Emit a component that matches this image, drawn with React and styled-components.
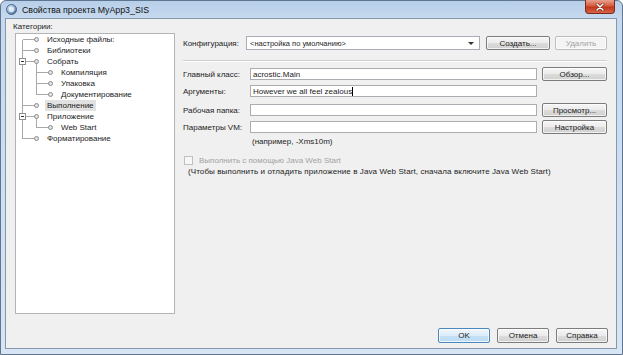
import React from 'react'
import styled, { createGlobalStyle } from 'styled-components'

const GlobalStyle = createGlobalStyle`
  html, body {
    margin: 0;
    padding: 0;
  }
  body {
    width: 623px;
    height: 355px;
    overflow: hidden;
    font-family: "Liberation Sans", Arial, sans-serif;
    font-size: 8px;
    color: #1c1c1c;
  }
`

const tree = [
  { label: 'Исходные файлы:', level: 1, first: true },
  { label: 'Библиотеки', level: 1 },
  { label: 'Собрать', level: 1, expanded: true },
  { label: 'Компиляция', level: 2 },
  { label: 'Упаковка', level: 2 },
  { label: 'Документирование', level: 2, lastChild: true },
  { label: 'Выполнение', level: 1, selected: true },
  { label: 'Приложение', level: 1, expanded: true },
  { label: 'Web Start', level: 2, lastChild: true },
  { label: 'Форматирование', level: 1, last: true },
]

function App() {
  return (
    <>
      <GlobalStyle />
      <Window>
        <TitleBar>
          <svg width="11" height="11" viewBox="0 0 11 11">
            <defs>
              <radialGradient id="ic" cx="40%" cy="35%" r="70%">
                <stop offset="0" stopColor="#e6f0f8" />
                <stop offset="0.6" stopColor="#8fb0cf" />
                <stop offset="1" stopColor="#3f5f82" />
              </radialGradient>
            </defs>
            <circle cx="5.5" cy="5.5" r="5" fill="url(#ic)" stroke="#3b5677" strokeWidth="0.8" />
            <circle cx="5.5" cy="5.5" r="2.6" fill="#f2f6fa" opacity="0.7" />
          </svg>
          <Title>Свойства проекта MyApp3_SIS</Title>
          <CloseButton>
            <svg width="10" height="8" viewBox="0 0 10 8">
              <path d="M2 1 L8 7 M8 1 L2 7" stroke="#6a1d12" strokeWidth="2.6" strokeLinecap="round" />
              <path d="M2 1 L8 7 M8 1 L2 7" stroke="#fff" strokeWidth="1.5" strokeLinecap="round" />
            </svg>
          </CloseButton>
        </TitleBar>

        <Client>
          <Body>
            <Sidebar>
              <SideLabel>Категории:</SideLabel>
              <Tree>
                {tree.map((item) => (
                  <TreeRow key={item.label}>
                    {item.level === 1 ? (
                      <>
                        <Guide $v={item.first ? 'bottom' : item.last ? 'top' : 'full'} $h="right">
                          {item.expanded && <Expander />}
                        </Guide>
                        <Guide $v={item.expanded ? 'bottom' : 'none'} $h="left">
                          <Bullet />
                        </Guide>
                      </>
                    ) : (
                      <>
                        <Guide $v="full" $h="none" />
                        <Guide $v={item.lastChild ? 'top' : 'full'} $h="right" />
                        <Guide $v="none" $h="left">
                          <Bullet />
                        </Guide>
                      </>
                    )}
                    <NodeLabel $selected={item.selected}>{item.label}</NodeLabel>
                  </TreeRow>
                ))}
              </Tree>
            </Sidebar>

            <Main>
              <ConfigRow>
                <ConfigLabel>Конфигурация:</ConfigLabel>
                <Combo>
                  <span>&lt;настройка по умолчанию&gt;</span>
                  <ComboArrow />
                </Combo>
                <Button $w={64}>Создать...</Button>
                <Button $w={52} disabled>Удалить</Button>
              </ConfigRow>

              <Separator />

              <FieldRow>
                <FieldLabel>Главный класс:</FieldLabel>
                <Input>acrostic.Main</Input>
                <Button $w={65}>Обзор...</Button>
              </FieldRow>
              <FieldRow $top={3}>
                <FieldLabel>Аргументы:</FieldLabel>
                <Input>
                  However we all feel zealous<Caret />
                </Input>
                <ButtonSlot />
              </FieldRow>
              <FieldRow $top={5}>
                <FieldLabel>Рабочая папка:</FieldLabel>
                <Input />
                <Button $w={65}>Просмотр...</Button>
              </FieldRow>
              <FieldRow $top={3}>
                <FieldLabel>Параметры VM:</FieldLabel>
                <Input />
                <Button $w={65}>Настройка</Button>
              </FieldRow>
              <Hint>(например, -Xms10m)</Hint>

              <CheckRow>
                <CheckBox />
                <span>Выполнить с помощью Java Web Start</span>
              </CheckRow>
              <Note>(Чтобы выполнить и отладить приложение в Java Web Start, сначала включите Java Web Start)</Note>
            </Main>
          </Body>

          <Footer>
            <Button $w={52} $h={15} $default>OK</Button>
            <Button $w={52} $h={15}>Отмена</Button>
            <Button $w={52} $h={15}>Справка</Button>
          </Footer>
        </Client>
      </Window>
    </>
  )
}

const Window = styled.div`
  width: 623px;
  height: 355px;
  box-sizing: border-box;
  display: flex;
  flex-direction: column;
  padding: 0 5px 5px 4px;
  border: 1px solid #60758f;
  border-radius: 6px 6px 0 0;
  background: linear-gradient(180deg, #b7cfe9 0px, #c6d9ee 17px, #cfe0f2 60%, #d7e5f4 100%);
`

const TitleBar = styled.div`
  height: 17px;
  display: flex;
  align-items: center;
  gap: 5px;
  padding-left: 1px;
`

const Title = styled.span`
  font-size: 8.8px;
  color: #111;
  margin-top: 1px;
`

const CloseButton = styled.div`
  margin-left: auto;
  align-self: flex-start;
  width: 30px;
  height: 14px;
  margin-right: 2px;
  margin-top: -1px;
  display: flex;
  align-items: center;
  justify-content: center;
  box-sizing: border-box;
  border: 1px solid #7d2a1e;
  border-top: none;
  border-radius: 0 0 4px 4px;
  background: linear-gradient(180deg, #e9a18e 0%, #d65a3f 45%, #c2361b 55%, #d5654a 100%);
`

const Client = styled.div`
  flex: 1;
  display: flex;
  flex-direction: column;
  background: #f0f0f0;
  border: 1px solid #8497ae;
  min-height: 0;
`

const Body = styled.div`
  flex: 1;
  display: flex;
  min-height: 0;
`

const Sidebar = styled.div`
  width: 162px;
  display: flex;
  flex-direction: column;
  padding: 2px 0 0 7px;
`

const SideLabel = styled.div`
  height: 12px;
  line-height: 12px;
`

const Tree = styled.div`
  flex: 1;
  margin-left: 2px;
  background: #fff;
  border: 1px solid #b4b4b4;
  padding-top: 0;
`

const TreeRow = styled.div`
  height: 11px;
  display: flex;
  align-items: stretch;
`

const vertical = {
  full: 'top: 0; bottom: 0;',
  top: 'top: 0; bottom: 50%;',
  bottom: 'top: 50%; bottom: 0;',
  none: 'display: none;',
}

const horizontal = {
  right: 'left: 50%; right: 0;',
  left: 'left: 0; right: 50%;',
  none: 'display: none;',
}

const Guide = styled.span`
  position: relative;
  width: 14px;
  flex: none;
  display: flex;
  align-items: center;
  justify-content: center;

  &::before {
    content: '';
    position: absolute;
    left: 6px;
    width: 1px;
    background: #a9a9a9;
    ${(p) => vertical[p.$v]}
  }
  &::after {
    content: '';
    position: absolute;
    top: 5px;
    height: 1px;
    background: #a9a9a9;
    ${(p) => horizontal[p.$h]}
  }
`

const Expander = styled.span`
  position: relative;
  z-index: 1;
  width: 7px;
  height: 7px;
  box-sizing: border-box;
  margin-left: -1px;
  border: 1px solid #8e8e8e;
  background: #fff;

  &::after {
    content: '';
    position: absolute;
    left: 1px;
    right: 1px;
    top: 2px;
    height: 1px;
    background: #333;
  }
`

const Bullet = styled.span`
  position: relative;
  z-index: 1;
  width: 5px;
  height: 5px;
  margin-left: -1px;
  box-sizing: border-box;
  border-radius: 50%;
  border: 1px solid #8c8c8c;
  background: #e4e4e4;
`

const NodeLabel = styled.span`
  align-self: center;
  margin-left: 1px;
  padding: 0 2px;
  line-height: 11px;
  background: ${(p) => (p.$selected ? '#e1e1e1' : 'transparent')};
  white-space: nowrap;
`

const Main = styled.div`
  flex: 1;
  display: flex;
  flex-direction: column;
  padding: 17px 9px 0 8px;
`

const ConfigRow = styled.div`
  display: flex;
  align-items: center;
  height: 14px;
  gap: 5px;
`

const ConfigLabel = styled.span`
  width: 58px;
  white-space: nowrap;
`

const Combo = styled.div`
  flex: 1;
  height: 12px;
  display: flex;
  align-items: center;
  justify-content: space-between;
  padding: 0 3px;
  margin-right: 1px;
  background: #fff;
  border: 1px solid #a9adb5;
  font-size: 7.5px;
`

const ComboArrow = styled.span`
  width: 0;
  height: 0;
  border-left: 3px solid transparent;
  border-right: 3px solid transparent;
  border-top: 3px solid #333;
  margin-right: 2px;
`

const Button = styled.button`
  width: ${(p) => p.$w}px;
  height: ${(p) => p.$h ?? 14}px;
  padding: 0;
  flex: none;
  font-family: inherit;
  font-size: 8px;
  color: ${(p) => (p.disabled ? '#a3a3a3' : '#222')};
  border: 1px solid ${(p) => (p.disabled ? '#b9bdc1' : p.$default ? '#4a88bd' : '#7c7c7c')};
  border-radius: 2px;
  background: ${(p) =>
    p.disabled
      ? '#f4f4f4'
      : p.$default
      ? 'linear-gradient(180deg, #f0f7fd 0%, #dcebf8 50%, #c4e0f5 51%, #bcdcf4 100%)'
      : 'linear-gradient(180deg, #f6f6f6 0%, #ebebeb 50%, #dcdcdc 51%, #d0d0d0 100%)'};
  box-shadow: inset 0 0 0 1px rgba(255, 255, 255, 0.7);
`

const Separator = styled.div`
  height: 1px;
  margin-top: 10px;
  background: #cfcfcf;
  border-bottom: 1px solid #fff;
`

const FieldRow = styled.div`
  display: flex;
  align-items: center;
  gap: 5px;
  height: 14px;
  margin-top: ${(p) => p.$top ?? 5}px;
`

const FieldLabel = styled.span`
  width: 62px;
  white-space: nowrap;
`

const Input = styled.div`
  flex: 1;
  height: 12px;
  box-sizing: border-box;
  display: flex;
  align-items: center;
  padding: 0 2px;
  background: #fff;
  border: 1px solid #abadb3;
  white-space: nowrap;
`

const Caret = styled.span`
  width: 1px;
  height: 9px;
  background: #000;
`

const ButtonSlot = styled.span`
  width: 65px;
  flex: none;
`

const Hint = styled.div`
  margin: 2px 0 0 69px;
  height: 11px;
  line-height: 11px;
`

const CheckRow = styled.div`
  display: flex;
  align-items: center;
  gap: 6px;
  margin-top: 9px;
  padding-left: 1px;
  color: #a2a2a2;
`

const CheckBox = styled.span`
  width: 9px;
  height: 9px;
  box-sizing: border-box;
  border: 1px solid #c0c0c0;
  background: #f7f7f7;
`

const Note = styled.div`
  margin: 2px 0 0 5px;
  line-height: 10px;
  letter-spacing: 0.1px;
  white-space: nowrap;
`

const Footer = styled.div`
  height: 34px;
  box-sizing: border-box;
  display: flex;
  justify-content: flex-end;
  align-items: flex-start;
  gap: 7px;
  padding: 14px 8px 0 0;
`

export default App
